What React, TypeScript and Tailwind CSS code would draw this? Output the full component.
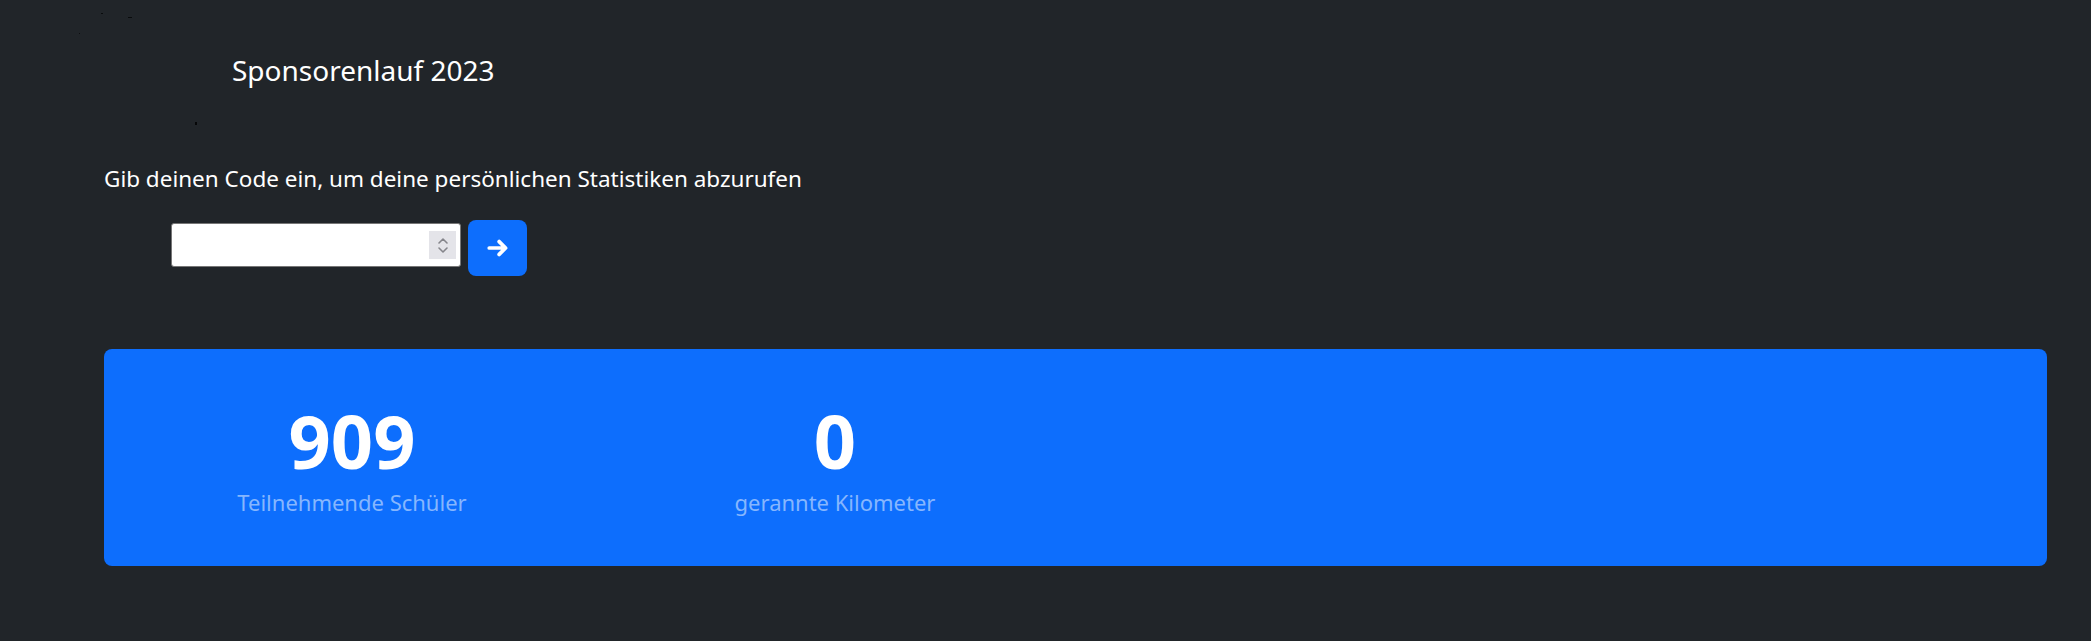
import { useState } from 'react'

function Stat({ value, label }: { value: string; label: string }) {
  return (
    <div className="flex w-[300px] flex-col items-center">
      <span className="text-[74px] leading-[74px] font-bold text-white">{value}</span>
      <span className="mt-[11px] text-[22px] leading-[26px] text-[#86b6fe]">{label}</span>
    </div>
  )
}

function Spinner() {
  return (
    <div className="flex h-[28px] w-[27px] flex-col items-center justify-center gap-[1px] bg-[#e4e4e9]">
      <svg width="12" height="9" viewBox="0 0 12 9" fill="none">
        <path d="M2 7l4-4 4 4" stroke="#85858b" strokeWidth="1.6" strokeLinecap="round" strokeLinejoin="round" />
      </svg>
      <svg width="12" height="9" viewBox="0 0 12 9" fill="none">
        <path d="M2 2l4 4 4-4" stroke="#85858b" strokeWidth="1.6" strokeLinecap="round" strokeLinejoin="round" />
      </svg>
    </div>
  )
}

export default function App() {
  const [code, setCode] = useState('')

  return (
    <div className="relative min-h-[641px] bg-[#212529] pr-[44px] pl-[104px] font-['Noto_Sans',sans-serif] text-white">
      {/* broken image remnants */}
      <span className="absolute top-[13px] left-[101px] h-px w-[2px] bg-black/70" />
      <span className="absolute top-[17px] left-[128px] h-px w-[4px] bg-black/70" />
      <span className="absolute top-[33px] left-[79px] h-px w-px bg-black/60" />
      <span className="absolute top-[122px] left-[195px] h-[3px] w-[2px] bg-black/80" />

      <header className="pt-[53px] pl-[128px]">
        <h1 className="text-[28px] leading-[34px] font-normal">Sponsorenlauf 2023</h1>
      </header>

      <p className="mt-[77px] text-[22.5px] leading-[30px]">
        Gib deinen Code ein, um deine persönlichen Statistiken abzurufen
      </p>

      <div className="mt-[26px] flex items-start gap-[7px] pl-[67px]">
        <div className="mt-[3px] flex h-[44px] w-[290px] items-center rounded-[3px] border border-[#767676] bg-white pr-[4px]">
          <input
            className="h-full min-w-0 flex-1 bg-transparent px-2 text-black outline-none"
            value={code}
            onChange={(event) => setCode(event.target.value)}
          />
          <Spinner />
        </div>
        <button className="flex h-[56px] w-[59px] items-center justify-center rounded-[8px] bg-[#0d6efd]">
          <svg width="28" height="28" viewBox="0 0 24 24" fill="none">
            <path d="M4.5 12h14M13 6.5l5.5 5.5-5.5 5.5" stroke="white" strokeWidth="3.2" strokeLinecap="round" strokeLinejoin="round" />
          </svg>
        </button>
      </div>

      <section className="mt-[73px] flex h-[217px] gap-[183px] rounded-[8px] bg-[#0d6efd] pt-[55px] pl-[98px]">
        <Stat value="909" label="Teilnehmende Schüler" />
        <Stat value="0" label="gerannte Kilometer" />
      </section>
    </div>
  )
}
